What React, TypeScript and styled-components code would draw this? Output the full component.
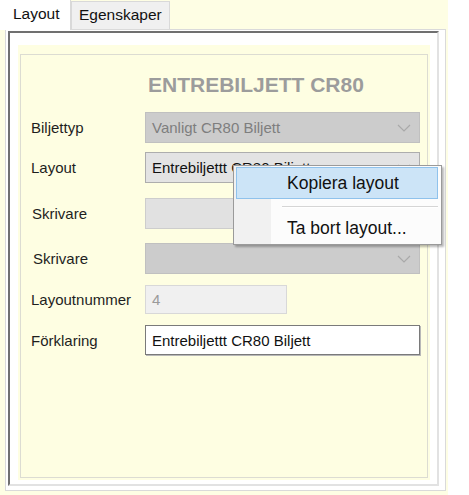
import React from "react";
import styled, { createGlobalStyle } from "styled-components";

const GlobalStyle = createGlobalStyle`
  html, body {
    margin: 0;
    padding: 0;
    background: #ffffff;
  }
  body {
    font-family: "Liberation Sans", Arial, sans-serif;
    color: #1e1e1e;
  }
`;

const Screen = styled.div`
  position: relative;
  width: 469px;
  height: 495px;
  overflow: hidden;
  background: #ffffff;
`;

const Form = styled.div`
  width: 448px;
  height: 495px;
  background: #fefee4;
  display: flex;
  flex-direction: column;
`;

const TabStrip = styled.div`
  height: 29px;
  display: flex;
  align-items: flex-start;
  position: relative;
  z-index: 1;
`;

const Tab = styled.div<{ $active?: boolean; $width: number }>`
  box-sizing: border-box;
  width: ${(p) => p.$width}px;
  height: ${(p) => (p.$active ? 30 : 28)}px;
  margin-top: ${(p) => (p.$active ? 0 : 1)}px;
  padding-left: ${(p) => (p.$active ? 13 : 7)}px;
  display: flex;
  align-items: center;
  font-size: 15.5px;
  color: #111;
  background: ${(p) => (p.$active ? "#ffffff" : "#f0f0f0")};
  border: 1px solid #d9d9d9;
  border-left: ${(p) => (p.$active ? "none" : "1px solid #d9d9d9")};
  border-top: ${(p) => (p.$active ? "none" : "1px solid #d9d9d9")};
  border-bottom: none;
  padding-bottom: ${(p) => (p.$active ? 3 : 1)}px;
`;

const TabPage = styled.div`
  flex: 1;
  margin: 0 2px 4px 5px;
  border: 1px solid #dadada;
  background: #ffffff;
  padding: 1px 6px 4px 2px;
  display: flex;
`;

const Sunken = styled.div`
  flex: 1;
  display: flex;
  border-top: 2px solid #707070;
  border-left: 2px solid #707070;
  border-right: 2px solid #e2e2e2;
  border-bottom: 2px solid #e2e2e2;
  padding: 12px 7px 4px 8px;
`;

const Panel = styled.div`
  flex: 1;
  display: flex;
  background: #fefee2;
  padding: 9px 2px 2px 2px;
`;

const GroupBox = styled.div`
  flex: 1;
  border: 1px solid #dcdcd2;
  padding: 18px 0 0 10px;
  display: flex;
  flex-direction: column;
`;

const Title = styled.div`
  margin-left: 117px;
  height: 24px;
  line-height: 24px;
  font-size: 21px;
  font-weight: bold;
  color: #9c9c9c;
  white-space: nowrap;
`;

const FieldRow = styled.div<{ $top: number; $height?: number }>`
  display: flex;
  align-items: center;
  margin-top: ${(p) => p.$top}px;
  height: ${(p) => p.$height ?? 31}px;
`;

const FieldLabel = styled.div<{ $indent?: number }>`
  width: 114px;
  padding-left: ${(p) => p.$indent ?? 0}px;
  box-sizing: border-box;
  font-size: 15px;
  color: #1e1e1e;
  white-space: nowrap;
`;

type Tone = "disabled" | "normal" | "blank";

const comboFill: Record<Tone, string> = {
  disabled: "#cccccc",
  normal: "#e3e3e3",
  blank: "#e1e1e1",
};

const comboBorder: Record<Tone, string> = {
  disabled: "#c0c0c0",
  normal: "#adadad",
  blank: "#cdcdcd",
};

const Combo = styled.div<{ $tone: Tone }>`
  box-sizing: border-box;
  width: 275px;
  height: 100%;
  display: flex;
  align-items: center;
  justify-content: space-between;
  padding: 0 8px 0 6px;
  background: ${(p) => comboFill[p.$tone]};
  border: 1px solid ${(p) => comboBorder[p.$tone]};
  font-size: 15px;
  color: ${(p) => (p.$tone === "disabled" ? "#7e7e7e" : "#111")};
  white-space: nowrap;
  overflow: hidden;
`;

const TextBox = styled.div<{ $width: number; $readOnly?: boolean }>`
  box-sizing: border-box;
  width: ${(p) => p.$width}px;
  height: 100%;
  display: flex;
  align-items: center;
  padding-left: 6px;
  font-size: 15px;
  white-space: nowrap;
  background: ${(p) => (p.$readOnly ? "#f0f0f0" : "#ffffff")};
  color: ${(p) => (p.$readOnly ? "#9a9a9a" : "#111")};
  border: 1px solid ${(p) => (p.$readOnly ? "#d8d8d8" : "#7a7a7a")};
  box-shadow: ${(p) => (p.$readOnly ? "none" : "1px 1px 0 #b8b8b8")};
`;

const Chevron = () => (
  <svg width="14" height="8" viewBox="0 0 14 8">
    <path d="M1 1 L7 7 L13 1" fill="none" stroke="#a9a9a9" strokeWidth="1.2" />
  </svg>
);

const ContextMenu = styled.div`
  position: absolute;
  left: 233px;
  top: 165px;
  width: 209px;
  height: 80px;
  box-sizing: border-box;
  border: 1px solid #9a9a9a;
  background: linear-gradient(to right, #f1f1f1 0 37px, #fcfcfc 37px);
  box-shadow: 2px 2px 2px rgba(0, 0, 0, 0.28);
  padding: 1px 3px 2px 2px;
  display: flex;
  flex-direction: column;
`;

const MenuItem = styled.div<{ $hot?: boolean; $height: number }>`
  box-sizing: border-box;
  height: ${(p) => p.$height}px;
  display: flex;
  align-items: center;
  padding-left: 50px;
  font-size: 17.5px;
  color: #111;
  white-space: nowrap;
  background: ${(p) => (p.$hot ? "#cce4f7" : "transparent")};
  border: 1px solid ${(p) => (p.$hot ? "#8fc2ec" : "transparent")};
`;

const MenuSeparator = styled.div`
  height: 15px;
  display: flex;
  align-items: center;
  padding-left: 46px;

  &::after {
    content: "";
    flex: 1;
    height: 1px;
    background: #d5d5d5;
    box-shadow: 0 1px 0 #ffffff;
  }
`;

export default function App() {
  return (
    <>
      <GlobalStyle />
      <Screen>
        <Form>
          <TabStrip>
            <Tab $active $width={71}>Layout</Tab>
            <Tab $width={99}>Egenskaper</Tab>
          </TabStrip>
          <TabPage>
            <Sunken>
              <Panel>
                <GroupBox>
                  <Title>ENTREBILJETT CR80</Title>
                  <FieldRow $top={15}>
                    <FieldLabel>Biljettyp</FieldLabel>
                    <Combo $tone="disabled">
                      <span>Vanligt CR80 Biljett</span>
                      <Chevron />
                    </Combo>
                  </FieldRow>
                  <FieldRow $top={9}>
                    <FieldLabel>Layout</FieldLabel>
                    <Combo $tone="normal">
                      <span>Entrebiljettt CR80 Biljett</span>
                      <Chevron />
                    </Combo>
                  </FieldRow>
                  <FieldRow $top={15}>
                    <FieldLabel $indent={1}>Skrivare</FieldLabel>
                    <Combo $tone="blank" />
                  </FieldRow>
                  <FieldRow $top={14}>
                    <FieldLabel $indent={2}>Skrivare</FieldLabel>
                    <Combo $tone="disabled">
                      <span />
                      <Chevron />
                    </Combo>
                  </FieldRow>
                  <FieldRow $top={11} $height={29}>
                    <FieldLabel>Layoutnummer</FieldLabel>
                    <TextBox $width={142} $readOnly>4</TextBox>
                  </FieldRow>
                  <FieldRow $top={11} $height={30}>
                    <FieldLabel>Förklaring</FieldLabel>
                    <TextBox $width={275}>Entrebiljettt CR80 Biljett</TextBox>
                  </FieldRow>
                </GroupBox>
              </Panel>
            </Sunken>
          </TabPage>
        </Form>
        <ContextMenu>
          <MenuItem $hot $height={32}>Kopiera layout</MenuItem>
          <MenuSeparator />
          <MenuItem $height={28}>Ta bort layout...</MenuItem>
        </ContextMenu>
      </Screen>
    </>
  );
}
